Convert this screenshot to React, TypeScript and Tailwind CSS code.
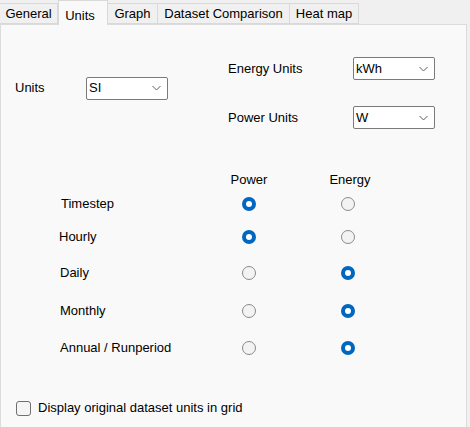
import React from "react";

const Chevron = () => (
  <svg width="9" height="5" viewBox="0 0 9 5" className="absolute right-[6px] top-1/2 -translate-y-1/2">
    <path d="M0.5 0.5 L4.5 4.5 L8.5 0.5" fill="none" stroke="#5f5f5f" strokeWidth="1" />
  </svg>
);

const Select = ({ value }: { value: string }) => (
  <div className="relative w-[82px] h-[23px] bg-white border border-[#7a7a7a] rounded-[2px] flex items-center pl-[2px] text-black">
    {value}
    <Chevron />
  </div>
);

const Radio = ({ on }: { on?: boolean }) =>
  on ? (
    <div className="w-[14px] h-[14px] rounded-full bg-[#0067c0] flex items-center justify-center">
      <div className="w-[6px] h-[6px] rounded-full bg-white" />
    </div>
  ) : (
    <div className="w-[14px] h-[14px] rounded-full border border-[#8a8a8a] bg-[#f3f3f3]" />
  );

const Tab = ({ label, w, selected }: { label: string; w: string; selected?: boolean }) =>
  selected ? (
    <div className={`${w} h-[24px] mt-[1px] -mb-[1px] bg-[#f9f9f9] border border-b-0 border-[#d9d9d9] flex items-start justify-center pt-[3px] pr-[6px] relative z-10 h-[25px]`}>
      {label}
    </div>
  ) : (
    <div className={`${w} h-[21px] mt-[3px] bg-[#f0f0f0] border border-[#d9d9d9] border-l-0 first:border-l flex items-center justify-center`}>
      {label}
    </div>
  );

type Row = { label: string; pl: string; h: string; power: boolean };

const rows: Row[] = [
  { label: "Timestep", pl: "pl-[60px]", h: "h-[28px]", power: true },
  { label: "Hourly", pl: "pl-[58px]", h: "h-[38px]", power: true },
  { label: "Daily", pl: "pl-[59px]", h: "h-[34px]", power: false },
  { label: "Monthly", pl: "pl-[59px]", h: "h-[42px]", power: false },
  { label: "Annual / Runperiod", pl: "pl-[59px]", h: "h-[32px]", power: false },
];

export default function App() {
  return (
    <div
      className="w-[470px] h-[427px] bg-[#f0f0f0] overflow-hidden text-[13px] text-black"
      style={{ fontFamily: '"Liberation Sans", Arial, sans-serif' }}
    >
      <div className="flex h-[24px] items-start">
        <div className="w-[58px] h-[21px] mt-[3px] bg-[#f0f0f0] border-y border-r border-[#d9d9d9] flex items-center justify-center">General</div>
        <div className="w-[50px] h-[25px] mt-[0px] bg-[#f9f9f9] border border-b-0 border-[#d9d9d9] flex items-start justify-center pt-[5px] pr-[6px] relative z-10">Units</div>
        <div className="w-[50px] h-[21px] mt-[3px] bg-[#f0f0f0] border-y border-r border-[#d9d9d9] flex items-center justify-center">Graph</div>
        <div className="w-[132px] h-[21px] mt-[3px] bg-[#f0f0f0] border-y border-r border-[#d9d9d9] flex items-center justify-center">Dataset Comparison</div>
        <div className="w-[69px] h-[21px] mt-[3px] bg-[#f0f0f0] border-y border-r border-[#d9d9d9] flex items-center justify-center">Heat map</div>
      </div>
      <div className="w-[467px] h-[420px] bg-[#f9f9f9] border border-[#dcdcdc]">
        <div className="flex pt-[32px]">
          <div className="flex items-center mt-[20px] h-[22px] self-start pl-[14px]">
            <div className="w-[71px]">Units</div>
            <Select value="SI" />
          </div>
          <div className="flex flex-col gap-[26px] ml-[60px]">
            <div className="flex items-center">
              <div className="w-[125px]">Energy Units</div>
              <Select value="kWh" />
            </div>
            <div className="flex items-center">
              <div className="w-[125px]">Power Units</div>
              <Select value="W" />
            </div>
          </div>
        </div>
        <div className="mt-[41px] flex h-[20px] items-center">
          <div className="w-[219px]" />
          <div className="w-[58px] text-center">Power</div>
          <div className="w-[144px] text-center">Energy</div>
        </div>
        {rows.map((r) => (
          <div key={r.label} className={`flex items-center ${r.h}`}>
            <div className={`w-[219px] ${r.pl}`}>{r.label}</div>
            <div className="w-[58px] flex justify-center">
              <Radio on={r.power} />
            </div>
            <div className="w-[140px] flex justify-center">
              <Radio on={!r.power} />
            </div>
          </div>
        ))}
        <div className="mt-[36px] flex items-center pl-[15px] h-[16px]">
          <div className="w-[15px] h-[15px] rounded-[3px] border border-[#6f6f6f] bg-[#f5f5f5]" />
          <div className="ml-[7px]">Display original dataset units in grid</div>
        </div>
      </div>
    </div>
  );
}
